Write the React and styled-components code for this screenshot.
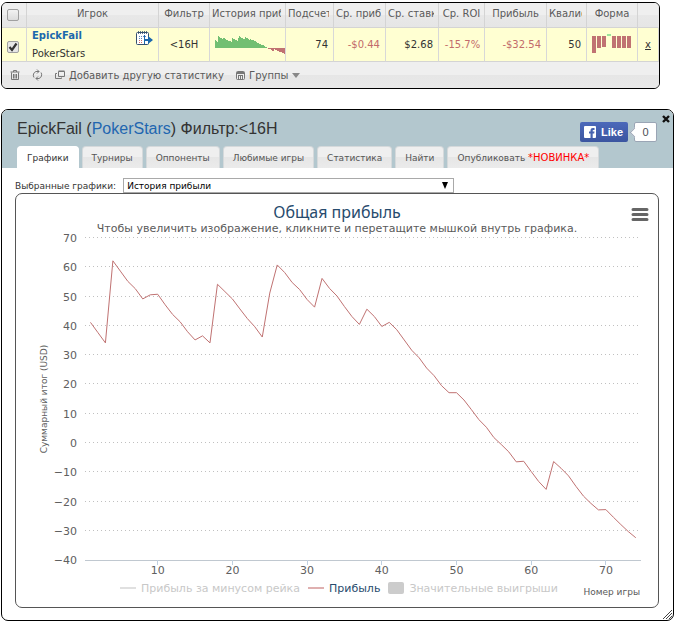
import React, { useState } from "react";
import styled, { createGlobalStyle } from "styled-components";

const Global = createGlobalStyle`
  * { box-sizing: border-box; }
  body {
    margin: 0;
    background: #fff;
    color: #444;
    font-family: "DejaVu Sans", Verdana, sans-serif;
    font-size: 10px;
  }
  button, select { font-family: inherit; }
`;

const Page = styled.main`
  display: flex;
  flex-direction: column;
  gap: 20px;
  padding: 2px 2px 2px 1px;
`;

/* ---------- player table ---------- */

const TableBox = styled.section`
  margin-right: 14px;
  border: 1px solid #000;
  border-radius: 6px;
  overflow: hidden;
`;

const Table = styled.table`
  width: 100%;
  table-layout: fixed;
  border-collapse: separate;
  border-spacing: 0;
`;

const Col = styled.col`
  width: ${(p) => (p.$w ? `${p.$w}px` : "auto")};
`;

const Th = styled.th`
  height: 25px;
  padding: 0 ${(p) => (p.$align ? "4px" : "2px")} 4px 2px;
  border-right: 1px solid #d4d4d4;
  border-bottom: 1px solid #d4d4d4;
  background: linear-gradient(#efefef 0 50%, #e8e8e8 50%, #e6e6e6);
  color: #5a5a5a;
  font-weight: normal;
  font-size: 10px;
  text-align: ${(p) => p.$align || "center"};
  &:last-child { border-right-color: #e8e8e8; }
`;

const ThText = styled.div`
  overflow: hidden;
  white-space: nowrap;
`;

const Td = styled.td`
  height: 34px;
  padding: ${(p) => (p.$tight ? "0 0 0 2px" : p.$flush ? "0 0 0 5px" : "0 5px")};
  border-right: 1px solid #d8d8d8;
  border-bottom: 1px solid #d4d4d4;
  background: #ffffd2;
  color: ${(p) => (p.$negative ? "#c26b6b" : "#333")};
  text-align: ${(p) => p.$align || "right"};
  white-space: nowrap;
`;

const Check = styled.input`
  display: block;
  appearance: none;
  width: 12px;
  height: 12px;
  margin: 4px 0 0 3px;
  border: 1px solid #a0a0a0;
  border-radius: 2px;
  background: linear-gradient(#f2f2f2, #dcdcdc);
  &:checked {
    background: url("data:image/svg+xml,%3Csvg xmlns='http://www.w3.org/2000/svg' viewBox='0 0 10 10'%3E%3Cpath d='M1.5 5l2.5 3 4.5-6.500' fill='none' stroke='%23333' stroke-width='2.2'/%3E%3C/svg%3E") center / 10px 10px no-repeat, #e6e6e6;
  }
`;

const Player = styled.div`
  display: flex;
  justify-content: space-between;
  text-align: left;
`;

const PlayerName = styled.div`
  display: flex;
  flex-direction: column;
  gap: 4px;
  line-height: 14px;
`;

const NameLink = styled.a`
  color: #1b68ad;
  font-weight: bold;
  text-decoration: none;
`;

const PlainLink = styled.a`
  color: #333;
`;

const IconButton = styled.button`
  display: inline-flex;
  align-items: center;
  gap: 4px;
  align-self: ${(p) => (p.$top ? "flex-start" : "center")};
  padding: ${(p) => (p.$top ? "2px 0 0" : "0")};
  border: 0;
  background: none;
  color: #5a5a5a;
  font-size: 10px;
  white-space: nowrap;
`;

const Svg = styled.svg`
  display: block;
  flex: none;
`;

const Footer = styled.div`
  display: flex;
  gap: 12px;
  height: 26px;
  padding: 0 8px;
  background: linear-gradient(#efefef 0 50%, #e6e6e6 50%, #e9e9e9);
`;

/* ---------- details panel ---------- */

const Panel = styled.section`
  position: relative;
  border: 1px solid #000;
  border-radius: 7px;
  overflow: hidden;
`;

const PanelHead = styled.header`
  background: #b3c7ce;
  padding: 9px 16px 0 15px;
`;

const TitleRow = styled.div`
  display: flex;
  justify-content: space-between;
  align-items: flex-start;
  height: 27px;
`;

const Title = styled.h1`
  margin: 0;
  font: 16px/20px "Liberation Sans", Arial, sans-serif;
  color: #333;
  a { color: #1f66b0; text-decoration: none; }
`;

const Social = styled.div`
  display: flex;
  gap: 6px;
  padding-top: 3px;
`;

const Like = styled.button`
  display: flex;
  align-items: center;
  gap: 5px;
  height: 20px;
  padding: 0 5px 0 4px;
  border: 0;
  border-radius: 2px;
  background: linear-gradient(#4c69ba, #3b55a0);
  color: #fff;
  font: bold 11px/20px "Liberation Sans", Arial, sans-serif;
`;

const Count = styled.span`
  position: relative;
  width: 23px;
  height: 20px;
  border: 1px solid #9aa5b5;
  border-radius: 2px;
  background: #fff;
  color: #4b4f56;
  font: 11px/18px "Liberation Sans", Arial, sans-serif;
  text-align: center;
  &::before {
    content: "";
    position: absolute;
    left: -4px;
    top: 6px;
    width: 6px;
    height: 6px;
    border: solid #9aa5b5;
    border-width: 0 0 1px 1px;
    background: #fff;
    transform: rotate(45deg);
  }
`;

const Close = styled.button`
  position: absolute;
  top: 5px;
  right: 3px;
  padding: 0;
  border: 0;
  background: none;
`;

const Tabs = styled.nav`
  display: flex;
  gap: 3px;
`;

const Tab = styled.button`
  height: 22px;
  padding: 0 9px;
  border: 1px solid ${(p) => (p.$active ? "#fff" : "#d5d9db")};
  border-bottom: 0;
  border-radius: 4px 4px 0 0;
  background: ${(p) => (p.$active ? "#fff" : "linear-gradient(#efefef 0 50%, #e6e6e6 50%, #ebebeb)")};
  color: ${(p) => (p.$active ? "#333" : "#555")};
  font-size: 9px;
  line-height: 20px;
  white-space: nowrap;
  em { color: #f00; font-size: 10px; font-style: normal; }
`;

const Body = styled.div`
  padding: 10px 14px 12px 13px;
`;

const Picker = styled.div`
  display: flex;
  align-items: center;
  gap: 7px;
  height: 15px;
  font-size: 9px;
  color: #333;
`;

const SelectWrap = styled.span`
  display: grid;
  align-items: center;
  flex: 0 1 331px;
  > * { grid-area: 1 / 1; }
  svg { justify-self: end; margin-right: 5px; pointer-events: none; }
`;

const Select = styled.select`
  appearance: none;
  height: 15px;
  padding: 0 3px;
  border: 1px solid #a9a9a9;
  border-radius: 0;
  background: #fff;
  color: #000;
  font-size: 9px;
`;

const ChartCard = styled.figure`
  position: relative;
  margin: 0;
  padding: 8px 0;
  border: 1px solid #555;
  border-radius: 7px;
`;

const ChartTitle = styled.h2`
  margin: 0;
  color: #274b6d;
  font: 16px/20px "Noto Sans", sans-serif;
  text-align: center;
`;

const ChartHint = styled.p`
  margin: 0;
  color: #5a5a5a;
  font-size: 11px;
  line-height: 14px;
  text-align: center;
`;

const MenuButton = styled.button`
  position: absolute;
  top: 14px;
  right: 9px;
  padding: 0;
  border: 0;
  background: none;
`;

const Plot = styled.svg`
  display: block;
  width: 100%;
  overflow: visible;
  text { font-size: 11px; fill: #606060; }
  .axis { font-size: 9px; }
`;

const LegendRow = styled.div`
  display: grid;
  grid-template-columns: 1fr auto;
  height: 22px;
  padding: 0 18px 0 104px;
`;

const Legend = styled.div`
  display: flex;
  gap: 8px;
`;

const LegendItem = styled.button`
  display: flex;
  align-items: center;
  gap: 5px;
  padding: 0;
  border: 0;
  background: none;
  color: ${(p) => (p.$on ? "#274b6d" : "#c8c8c8")};
  font-size: 11px;
  white-space: nowrap;
`;

const AxisName = styled.span`
  align-self: end;
  color: #5a5a5a;
  font-size: 9px;
  line-height: 14px;
  white-space: nowrap;
`;

const Grip = styled(Svg)`
  position: absolute;
  right: 1px;
  bottom: 1px;
`;

const profit = [
  41, 37.5, 34, 62, 58.5, 55, 52.5, 49, 50.4, 50.6, 47, 43.7, 41.2, 37.8, 35, 36.4, 34, 54, 51.5, 49,
  45.6, 42.3, 39.5, 36, 51, 60.6, 58, 54.6, 52.2, 48.8, 46.2, 56, 52.6, 50, 46.4, 43, 40.3, 45.5, 43, 39.6,
  41, 38.5, 35, 31.5, 28.9, 25.4, 22.8, 19.4, 17, 17, 14.5, 11.2, 7.8, 5.2, 1.7, -0.7, -3.2, -6.6, -6.4, -9.9,
  -13.3, -16, -6.5, -8.8, -11.4, -15, -18.3, -20.8, -23, -22.9, -25.5, -28, -30.4, -32.5,
];

const Sparkline = () => (
  <Svg width="70" height="20" shapeRendering="crispEdges" aria-hidden="true">
    {Array.from({ length: 70 }, (_, i) => {
      const v = Math.round(profit[Math.floor((i * 74) / 70)] * 0.19);
      return <rect key={i} x={i} y={v > 0 ? 13 - v : 13} width="1" height={Math.abs(v)} fill={v > 0 ? "#72bf72" : "#c07272"} />;
    })}
  </Svg>
);

const FormBars = () => (
  <Svg width="40" height="22" shapeRendering="crispEdges" aria-hidden="true">
    {[17, 12, 11, -2, 12, 12, 12, 12].map((h, i) => (
      <rect key={i} x={i * 5} y={h > 0 ? 2 : 0} width="4" height={Math.abs(h)} fill={h > 0 ? "#c07272" : "#9be49b"} />
    ))}
  </Svg>
);

const CalendarIcon = () => (
  <Svg width="17" height="16" viewBox="0 0 17 16" aria-hidden="true">
    <rect x="0.500" y="1.500" width="12" height="12" rx="1" fill="#fff" stroke="#35506e" />
    <path d="M2.500 0v3M4.500 0v3M6.500 0v3M8.500 0v3M10.500 0v3" stroke="#35506e" strokeWidth="0.800" />
    <path d="M3 5.500h7M3 7.500h4" stroke="#5d86bd" strokeDasharray="1 1" />
    <path d="M3 9.500h4M3 11.500h4" stroke="#d06a6a" strokeDasharray="1 1" />
    <path d="M8.500 4v9" stroke="#1b68ad" />
    <path d="M8 8h4V5l5 4-5 4v-3H8z" fill="#1b68ad" />
  </Svg>
);

const TrashIcon = () => (
  <Svg width="10" height="12" viewBox="0 0 10 12" fill="none" stroke="#777" aria-hidden="true">
    <path d="M0.500 3h9M3.500 3V1.500h3V3M1.500 3.500v7h7v-7M3.500 5v4.500M5 5v4.500M6.500 5v4.500" />
  </Svg>
);

const RefreshIcon = () => (
  <Svg width="11" height="12" viewBox="0 0 11 12" fill="none" stroke="#777" aria-hidden="true">
    <path d="M2 8.500A4 4 0 0 1 4 2.500h3M5 0.500l2 2-2 2M9 3.500a4 4 0 0 1-2 6H4M6 7.500l-2 2 2 2" />
  </Svg>
);

const WindowsIcon = () => (
  <Svg width="10" height="10" viewBox="0 0 10 10" fill="none" stroke="#777" aria-hidden="true">
    <path d="M3.500 1.500h6v5h-6zM3.500 1h6M2 3.500H0.500v5h6V7.500" />
  </Svg>
);

const GroupIcon = () => (
  <Svg width="9" height="9" viewBox="0 0 9 9" aria-hidden="true">
    <rect x="0.500" y="0.500" width="8" height="8" rx="1" fill="#eee" stroke="#777" />
    <path d="M1 1h7v2H1zM2 4h5v1H2zM2 5h1v3H2zM4 5h1v3H4zM6 5h1v3H6z" fill="#777" />
  </Svg>
);

const Caret = () => (
  <Svg width="8" height="5" aria-hidden="true"><path d="M0 0h8L4 5z" fill="#888" /></Svg>
);

const xAt = (n) => 67 + n * 7.47;
const yAt = (v) => 206.5 - v * 2.93;

function ProfitChart() {
  const levels = [70, 60, 50, 40, 30, 20, 10, 0, -10, -20, -30, -40];
  return (
    <Plot viewBox="0 0 642 341" role="img" aria-label="Общая прибыль">
      {levels.map((v) => {
        const y = Math.floor(yAt(v)) + 0.5;
        return (
          <g key={v}>
            <text x="61" y={y + 4} textAnchor="end">{v < 0 ? `−${-v}` : v}</text>
            {v > -40 && <path d={`M69 ${y}H625`} stroke="#c0c0c0" strokeDasharray="1 3" />}
          </g>
        );
      })}
      <path d="M69 324.500H625" stroke="#c0c8d0" />
      {[10, 20, 30, 40, 50, 60, 70].map((n) => (
        <g key={n}>
          <path d={`M${Math.floor(xAt(n)) + 0.5} 324v5`} stroke="#c0d0e0" />
          <text x={xAt(n)} y="338" textAnchor="middle">{n}</text>
        </g>
      ))}
      <text className="axis" textAnchor="middle" transform="translate(31 163) rotate(-90)">Суммарный итог (USD)</text>
      <polyline points={profit.map((v, i) => `${xAt(i + 1)},${yAt(v)}`).join(" ")} fill="none" stroke="#c07272" />
    </Plot>
  );
}

const columns = [
  ["Игрок", null], ["Фильтр", 51], ["История прибыли", 76, "left"], ["Подсчет", 48, "left"],
  ["Ср. прибыль", 52, "left"], ["Ср. ставка", 53, "left"], ["Ср. ROI", 46], ["Прибыль", 62],
  ["Квалиф", 40, "left"], ["Форма", 51], ["", 21],
];

const tabs = ["Графики", "Турниры", "Оппоненты", "Любимые игры", "Статистика", "Найти"];

export default function App() {
  const [tab, setTab] = useState("Графики");
  return (
    <>
      <Global />
      <Page>
        <TableBox>
          <Table>
            <colgroup>
              <Col $w={25} />
              {columns.map(([, w], i) => <Col key={i} $w={w} />)}
            </colgroup>
            <thead>
              <tr>
                <Th><Check type="checkbox" aria-label="Выбрать все" /></Th>
                {columns.map(([name, , align], i) => (
                  <Th key={i} $align={align}><ThText>{name}</ThText></Th>
                ))}
              </tr>
            </thead>
            <tbody>
              <tr>
                <Td $tight><Check type="checkbox" defaultChecked aria-label="EpickFail" /></Td>
                <Td>
                  <Player>
                    <PlayerName>
                      <NameLink href="#player">EpickFail</NameLink>
                      <span>PokerStars</span>
                    </PlayerName>
                    <IconButton $top aria-label="Календарь"><CalendarIcon /></IconButton>
                  </Player>
                </Td>
                <Td $align="center">&lt;16H</Td>
                <Td $flush><Sparkline /></Td>
                <Td>74</Td>
                <Td $negative>-$0.44</Td>
                <Td>$2.68</Td>
                <Td $negative $tight $align="center">-15.7%</Td>
                <Td $negative>-$32.54</Td>
                <Td>50</Td>
                <Td><FormBars /></Td>
                <Td $align="center"><PlainLink href="#remove">x</PlainLink></Td>
              </tr>
            </tbody>
          </Table>
          <Footer>
            <IconButton aria-label="Удалить"><TrashIcon /></IconButton>
            <IconButton aria-label="Обновить"><RefreshIcon /></IconButton>
            <IconButton><WindowsIcon />Добавить другую статистику</IconButton>
            <IconButton><GroupIcon />Группы<Caret /></IconButton>
          </Footer>
        </TableBox>

        <Panel>
          <PanelHead>
            <TitleRow>
              <Title>EpickFail (<a href="#network">PokerStars</a>) Фильтр:&lt;16H</Title>
              <Social>
                <Like>
                  <Svg width="12" height="12" viewBox="0 0 12 12" aria-hidden="true">
                    <rect width="12" height="12" rx="1" fill="#fff" />
                    <path d="M6.500 12V7.500H5V5.500h1.500V4.500C6.500 2.800 7.500 2 9 2h1.500v2H9.500c-.6 0-.8.300-.8.800v.7h1.800l-.3 2H8.700V12z" fill="#4662af" />
                  </Svg>
                  Like
                </Like>
                <Count>0</Count>
              </Social>
            </TitleRow>
            <Tabs>
              {tabs.map((t) => (
                <Tab key={t} $active={t === tab} onClick={() => setTab(t)}>{t}</Tab>
              ))}
              <Tab>Опубликовать <em>*НОВИНКА*</em></Tab>
            </Tabs>
          </PanelHead>
          <Close aria-label="Закрыть">
            <Svg width="8" height="8" viewBox="0 0 8 8" aria-hidden="true">
              <path d="M1 1l6 6M7 1L1 7" stroke="#111" strokeWidth="2.400" />
            </Svg>
          </Close>
          <Body>
            <Picker>
              <label htmlFor="graph">Выбранные графики:</label>
              <SelectWrap>
                <Select id="graph"><option>История прибыли</option></Select>
                <Svg width="8" height="7" aria-hidden="true"><path d="M1 0h6L4 7z" fill="#000" /></Svg>
              </SelectWrap>
            </Picker>
            <ChartCard>
              <ChartTitle>Общая прибыль</ChartTitle>
              <ChartHint>Чтобы увеличить изображение, кликните и перетащите мышкой внутрь графика.</ChartHint>
              <MenuButton aria-label="Меню">
                <Svg width="18" height="13" stroke="#666" strokeWidth="3" strokeLinecap="round" aria-hidden="true">
                  <path d="M2 1.500h14M2 6.500h14M2 11.500h14" />
                </Svg>
              </MenuButton>
              <ProfitChart />
              <LegendRow>
                <Legend>
                  <LegendItem>
                    <Svg width="16" height="2" aria-hidden="true"><path d="M0 1h16" stroke="#e0e0e0" strokeWidth="2" /></Svg>
                    Прибыль за минусом рейка
                  </LegendItem>
                  <LegendItem $on>
                    <Svg width="16" height="2" aria-hidden="true"><path d="M0 1h16" stroke="#dfb0b0" strokeWidth="2" /></Svg>
                    Прибыль
                  </LegendItem>
                  <LegendItem>
                    <Svg width="16" height="12" aria-hidden="true"><rect width="16" height="12" rx="2" fill="#ccc" /></Svg>
                    Значительные выигрыши
                  </LegendItem>
                </Legend>
                <AxisName>Номер игры</AxisName>
              </LegendRow>
            </ChartCard>
          </Body>
          <Grip width="9" height="9" viewBox="0 0 9 9" stroke="#444" aria-hidden="true">
            <path d="M0 9L9 0M3 9L9 3M6 9L9 6" />
          </Grip>
        </Panel>
      </Page>
    </>
  );
}
